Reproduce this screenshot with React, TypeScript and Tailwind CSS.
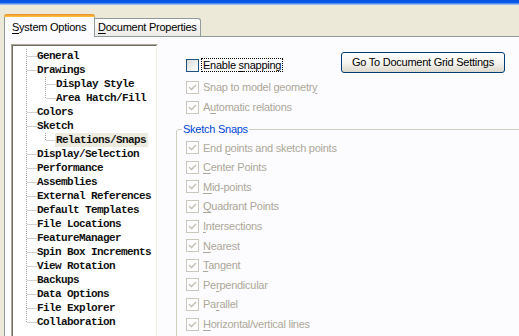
import React from "react";

type TreeItem = { label: string; level: 1 | 2; last?: boolean; selected?: boolean };

const tree: TreeItem[] = [
  { label: "General", level: 1 },
  { label: "Drawings", level: 1 },
  { label: "Display Style", level: 2 },
  { label: "Area Hatch/Fill", level: 2, last: true },
  { label: "Colors", level: 1 },
  { label: "Sketch", level: 1 },
  { label: "Relations/Snaps", level: 2, last: true, selected: true },
  { label: "Display/Selection", level: 1 },
  { label: "Performance", level: 1 },
  { label: "Assemblies", level: 1 },
  { label: "External References", level: 1 },
  { label: "Default Templates", level: 1 },
  { label: "File Locations", level: 1 },
  { label: "FeatureManager", level: 1 },
  { label: "Spin Box Increments", level: 1 },
  { label: "View Rotation", level: 1 },
  { label: "Backups", level: 1 },
  { label: "Data Options", level: 1 },
  { label: "File Explorer", level: 1 },
  { label: "Collaboration", level: 1, last: true },
];

const snaps: [string, number][] = [
  ["End points and sketch points", 4],
  ["Center Points", 0],
  ["Mid-points", 0],
  ["Quadrant Points", 0],
  ["Intersections", 0],
  ["Nearest", 0],
  ["Tangent", 0],
  ["Perpendicular", 2],
  ["Parallel", 2],
  ["Horizontal/vertical lines", 0],
];

const sans = "font-['Liberation_Sans',Arial,sans-serif]";

function Connector({ vertical, half, branch, width }: { vertical: boolean; half?: boolean; branch: boolean; width: number }) {
  const x = width === 16 ? 5.5 : 8.5;
  return (
    <svg width={width} height="14" className="shrink-0">
      {vertical && (
        <line x1={x} y1="0" x2={x} y2={half ? 7.5 : 14} stroke="#A0A0A0" strokeDasharray="1 1" />
      )}
      {branch && (
        <line x1={x + 1} y1="7.5" x2={x + 10} y2="7.5" stroke="#A0A0A0" strokeDasharray="1 1" />
      )}
    </svg>
  );
}

function Label({ text, u }: { text: string; u: number }) {
  return (
    <>
      {text.slice(0, u)}
      <span className="underline underline-offset-[2px]">{text[u]}</span>
      {text.slice(u + 1)}
    </>
  );
}

function Box({ checked, disabled }: { checked?: boolean; disabled?: boolean }) {
  return (
    <span
      className={`w-[13px] h-[13px] shrink-0 border flex items-center justify-center ${
        disabled ? "border-[#CAC8BB] bg-white" : "border-[#1C5180] bg-linear-to-br from-[#DCDCD7] to-white"
      }`}
    >
      {checked && (
        <svg width="11" height="11" viewBox="0 0 11 11">
          <path d="M2 5 L4.5 7.5 L9 3" fill="none" stroke="#C6C4B8" strokeWidth="1.6" />
        </svg>
      )}
    </span>
  );
}

function CheckRow({ text, u, h = "h-[20px]" }: { text: string; u: number; h?: string }) {
  return (
    <div className={`flex items-center gap-[4px] ${h}`}>
      <Box checked disabled />
      <span className="text-[#ACA899] whitespace-nowrap">
        <Label text={text} u={u} />
      </span>
    </div>
  );
}

export default function App() {
  return (
    <div className={`w-[519px] h-[336px] overflow-hidden bg-[#ECE9D8] flex flex-col text-[11px] tracking-[-0.25px] ${sans}`}>
      {/* window frame edge */}
      <div className="h-[5px] shrink-0 bg-linear-to-b from-[#0553E0] via-[#0A5BE8] to-[#B9CDF2]" />

      {/* Tabs */}
      <div className="h-[31px] shrink-0 flex items-end pl-[4px]">
        <div className="relative z-10 -mb-[1px] h-[23px] w-[91px] bg-[#FCFCFE] border-x border-[#919B9C] rounded-t-[3px] flex flex-col">
          <div className="h-[3px] -mx-[1px] rounded-t-[3px] bg-linear-to-b from-[#E68B2C] to-[#FFC73C]" />
          <div className="flex-1 flex items-center pl-[7px] leading-none text-black whitespace-nowrap">
            <Label text="System Options" u={0} />
          </div>
        </div>
        <div className="h-[18px] w-[106px] border-t border-r border-[#919B9C] rounded-tr-[3px] bg-linear-to-b from-white to-[#ECEBE6] flex items-center pl-[3px] leading-none text-black whitespace-nowrap">
          <Label text="Document Properties" u={0} />
        </div>
      </div>

      {/* Panel */}
      <div className="flex-1 ml-[4px] bg-[#FCFCFE] border-l border-t border-[#919B9C] flex items-start pl-[6px] pt-[7px]">
        {/* Tree */}
        <div className="w-[147px] h-[320px] shrink-0 border border-[#ACA899] border-r-white border-b-white">
          <div className="h-full border border-[#716F64] border-r-[#F1EFE2] border-b-[#F1EFE2] bg-white pl-[8px] pt-[3px] font-['Liberation_Mono',monospace] font-bold text-[11px] tracking-[-0.6px] text-[#111]">
            {tree.map((t, i) => {
              const rootLast = i === tree.length - 1;
              return (
                <div key={t.label} className="flex h-[14px] items-center">
                  {t.level === 1 ? (
                    <Connector width={16} vertical half={rootLast} branch />
                  ) : (
                    <>
                      <Connector width={16} vertical branch={false} />
                      <Connector width={19} vertical half={t.last} branch />
                    </>
                  )}
                  <span
                    className={`leading-[14px] whitespace-nowrap ${
                      t.selected ? "bg-[#EDEADF] -ml-[1px] pl-[1px] pr-[2px]" : ""
                    }`}
                  >
                    {t.label}
                  </span>
                </div>
              );
            })}
          </div>
        </div>

        {/* Options */}
        <div className="ml-[18px] pt-[8px] flex-1 min-w-0 flex flex-col">
          <div className="flex items-start justify-between pr-[14px]">
            <div className="mt-[3px] h-[20px] pl-[10px] flex items-center gap-[2px]">
              <Box />
              <span className="px-[1px] border border-dotted border-black leading-[12px] text-black whitespace-nowrap">
                <Label text="Enable snapping" u={7} />
              </span>
            </div>
            <button className="h-[21px] w-[164px] rounded-[3px] border border-[#003C74] bg-linear-to-b from-white via-[#F6F5F1] to-[#DCD8CC] text-black text-[11px] leading-none whitespace-nowrap">
              Go To Document Grid Settings
            </button>
          </div>
          <div className="pl-[10px] mt-[2px]">
            <CheckRow text="Snap to model geometry" u={21} />
            <CheckRow text="Automatic relations" u={1} />
          </div>

          <fieldset className="mt-[5px] w-[360px] h-[240px] border border-[#D0D0BF] rounded-[3px] pl-[9px] pt-[2px]">
            <legend className="-ml-[4px] px-[1px] text-[#0046D5] leading-[14px]">Sketch Snaps</legend>
            {snaps.map(([text, u]) => (
              <CheckRow key={text} text={text} u={u} h="h-[19.6px]" />
            ))}
          </fieldset>
        </div>
      </div>
    </div>
  );
}
